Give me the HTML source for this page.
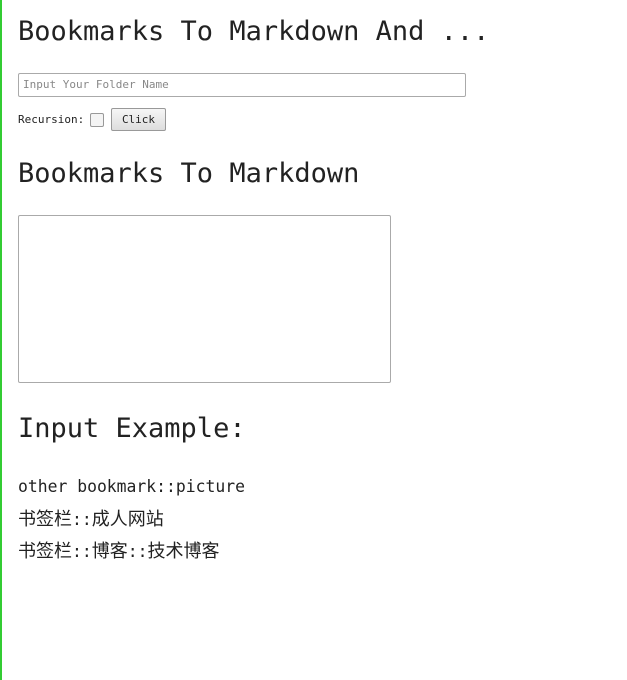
<!DOCTYPE html>
<html><head><style>
body{margin:0;width:627px;height:680px;background:#fff;position:relative;font-family:"DejaVu Sans Mono","Liberation Mono","Noto Sans CJK SC",monospace;color:#222;overflow:hidden}
.bar{position:absolute;left:0;top:0;width:2px;height:680px;background:#3c3}
h1{position:absolute;left:18px;margin:0;font-weight:normal;font-size:27px;line-height:32px}
.inp{position:absolute;left:18px;top:73px;font-size:11px;color:#888;line-height:22px;padding-left:4px;box-sizing:border-box;width:448px;height:24px;border:1px solid #aaa;border-radius:2px}
.lab{position:absolute;left:18px;top:113px;font-size:11px}
.cb{position:absolute;left:90px;top:113px;width:12px;height:12px;border:1px solid #999;border-radius:2px;background:#f4f4f4}
.btn{position:absolute;left:111px;top:108px;border:1px solid #999;border-radius:2px;background:linear-gradient(#f6f6f6,#ddd);font-size:11px;text-align:center;line-height:22px;box-sizing:border-box;width:55px;height:23px}
.ta{position:absolute;left:18px;top:215px;width:373px;height:168px;border:1px solid #aaa;border-radius:2px;box-sizing:border-box}
.ex{position:absolute;left:18px;font-size:16.4px;font-family:"DejaVu Sans Mono",monospace}
.cn{font-family:"Noto Sans CJK SC",sans-serif;font-size:18px;line-height:24px}
.cn span{font-family:"DejaVu Sans Mono",monospace;font-size:16.4px}
</style></head><body>
<div class="bar"></div>
<h1 style="top:16px">Bookmarks To Markdown And ...</h1>
<div class="inp">Input Your Folder Name</div>
<div class="lab">Recursion:</div>
<div class="cb"></div>
<div class="btn">Click</div>
<h1 style="top:158px">Bookmarks To Markdown</h1>
<div class="ta"></div>
<h1 style="top:413px">Input Example:</h1>
<div class="ex" style="top:477px">other bookmark::picture</div>
<div class="ex cn" style="top:506px">书签栏<span>::</span>成人网站</div>
<div class="ex cn" style="top:538px">书签栏<span>::</span>博客<span>::</span>技术博客</div>
</body></html>
